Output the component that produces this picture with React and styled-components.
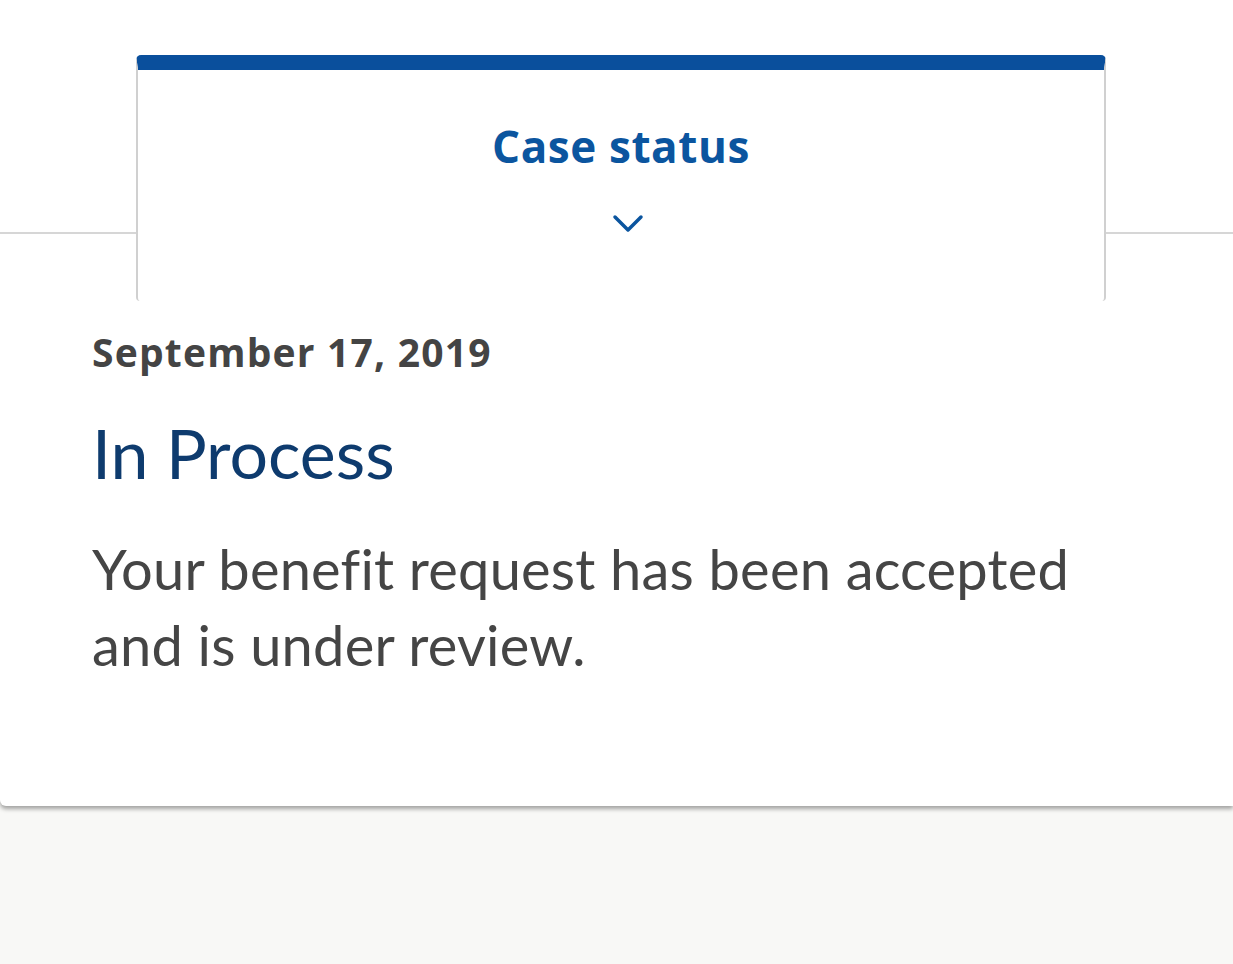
import React from 'react';
import styled, { createGlobalStyle } from 'styled-components';

const Global = createGlobalStyle`
  html, body {
    margin: 0;
    padding: 0;
    background: #f8f8f6;
  }
  body {
    font-family: 'Lato', 'Open Sans', sans-serif;
    -webkit-font-smoothing: antialiased;
  }
`

const Page = styled.div`
  width: 1233px;
  min-height: 964px;
  background: #f8f8f6;
`

const Sheet = styled.div`
  background: #fff;
  padding-top: 55px;
  box-shadow: 0 3px 4px rgba(0, 0, 0, 0.35);
  border-bottom-left-radius: 6px;
`

const Tab = styled.div`
  position: relative;
  z-index: 1;
  box-sizing: border-box;
  width: 970px;
  height: 246px;
  margin-left: 136px;
  background: #fff;
  border-top: 15px solid #0a4f9c;
  border-left: 2px solid #d0d0d0;
  border-right: 2px solid #d0d0d0;
  border-radius: 5px 5px 4px 4px;
  display: flex;
  flex-direction: column;
  align-items: center;
  padding-top: 54px;
`

const TabTitle = styled.div`
  font-family: 'Open Sans', 'Lato', sans-serif;
  font-size: 44px;
  font-weight: 700;
  letter-spacing: 0.6px;
  color: #0b559f;
  line-height: 1;
`

const Chevron = styled.svg`
  margin: 46px 0 0 14px;
  width: 32px;
  height: 20px;
`

const Card = styled.div`
  margin-top: -69px;
  border-top: 2px solid #d6d6d6;
  padding: 98px 92px 0;
  height: 474px;
`

const DateLine = styled.div`
  font-family: 'Open Sans', 'Lato', sans-serif;
  font-size: 39px;
  font-weight: 700;
  letter-spacing: 1.2px;
  color: #444;
  line-height: 1;
`

const Status = styled.h2`
  margin: 48px 0 0;
  font-size: 68px;
  font-weight: 400;
  color: #0e3b6e;
  line-height: 1;
`

const Body = styled.p`
  margin: 44px 0 0;
  font-size: 56px;
  letter-spacing: 0.2px;
  line-height: 76px;
  color: #454545;
  width: 1040px;
`

export default function App() {
  return (
    <Page>
      <Global />
      <Sheet>
        <Tab>
          <TabTitle>Case status</TabTitle>
          <Chevron viewBox="0 0 32 20">
            <path d="M3 3 L16 16 L29 3" fill="none" stroke="#0b559f" strokeWidth="3.5" strokeLinecap="round" strokeLinejoin="round" />
          </Chevron>
        </Tab>
        <Card>
          <DateLine>September 17, 2019</DateLine>
          <Status>In Process</Status>
          <Body>Your benefit request has been accepted and is under review.</Body>
        </Card>
      </Sheet>
    </Page>
  );
}
